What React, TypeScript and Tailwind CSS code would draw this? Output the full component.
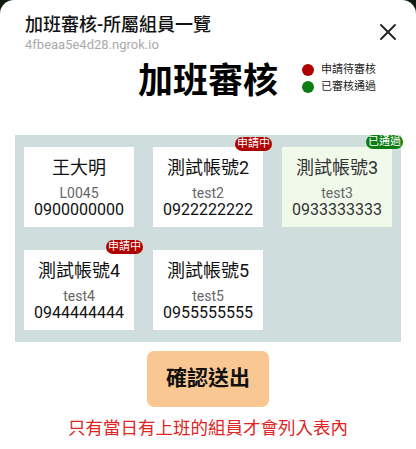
import { X } from "lucide-react"

type Member = {
  name: string
  id: string
  phone: string
  status?: "pending" | "approved"
}

const members: Member[] = [
  { name: "王大明", id: "L0045", phone: "0900000000" },
  { name: "測試帳號2", id: "test2", phone: "0922222222", status: "pending" },
  { name: "測試帳號3", id: "test3", phone: "0933333333", status: "approved" },
  { name: "測試帳號4", id: "test4", phone: "0944444444", status: "pending" },
  { name: "測試帳號5", id: "test5", phone: "0955555555" },
]

const font = "font-['Roboto','Noto_Sans_CJK_TC',sans-serif]"

function MemberCard({ member }: { member: Member }) {
  const approved = member.status === "approved"
  return (
    <div
      className={`relative h-[80px] flex flex-col items-center pt-[9px] ${
        approved ? "bg-[#f1f9eb]" : "bg-white"
      }`}
    >
      {member.status === "pending" && (
        <span className="absolute -top-[10px] -right-[9px] h-[14px] px-[2px] rounded-full bg-[#b00000] text-white text-[11px] leading-[14px]">
          申請中
        </span>
      )}
      {approved && (
        <span className="absolute -top-[12px] -right-[11px] h-[14px] px-[2px] rounded-full bg-[#0c7d12] text-white text-[11px] leading-[14px]">
          已通過
        </span>
      )}
      <div className={`text-[18px] leading-[24px] ${approved ? "text-[#333]" : "text-[#111]"}`}>{member.name}</div>
      <div className="mt-[4px] text-[14px] leading-[18px] text-[#666]">{member.id}</div>
      <div className={`text-[16px] leading-[16px] ${approved ? "text-[#333]" : "text-[#111]"}`}>{member.phone}</div>
    </div>
  )
}

export default function App() {
  return (
    <div className={`w-[416px] h-[449px] bg-[#0d1a10] ${font}`}>
      <div className="h-full bg-white rounded-t-[14px] flex flex-col">
        {/* Header */}
        <div className="flex items-start justify-between pl-[25px] pr-[14px] pt-[13px]">
          <div>
            <div className="text-[18px] leading-[24px] font-medium text-[#111]">加班審核-所屬組員一覽</div>
            <div className="text-[13px] leading-[16px] text-[#aaaaaa]">4fbeaa5e4d28.ngrok.io</div>
          </div>
          <X className="mt-[5px] w-[28px] h-[28px] text-[#222]" strokeWidth={1.6} />
        </div>

        {/* Title + legend */}
        <div className="relative flex justify-center mt-[9px]">
          <div className="text-[35px] leading-[40px] font-bold text-black">加班審核</div>
          <div className="absolute left-[302px] top-[2px] flex flex-col gap-[5px]">
            <div className="flex items-center gap-[7px]">
              <span className="w-[12px] h-[12px] rounded-full bg-[#b00000]" />
              <span className="text-[11px] leading-[12px] text-[#222]">申請待審核</span>
            </div>
            <div className="flex items-center gap-[7px]">
              <span className="w-[12px] h-[12px] rounded-full bg-[#0c7d12]" />
              <span className="text-[11px] leading-[12px] text-[#222]">已審核通過</span>
            </div>
          </div>
        </div>

        {/* Members panel */}
        <div className="mx-[15px] mt-[33px] bg-[#d0dddd] px-[9px] py-[12px] grid grid-cols-3 gap-x-[19px] gap-y-[23px]">
          {members.map((m) => (
            <MemberCard key={m.id} member={m} />
          ))}
        </div>

        <div className="flex justify-center mt-[9px]">
          <button className="w-[122px] h-[56px] rounded-[7px] bg-[#f9c892] text-[21px] font-bold text-[#111]">
            確認送出
          </button>
        </div>

        <div className="mt-[9px] text-center text-[17.5px] leading-[24px] text-[#e02424]">
          只有當日有上班的組員才會列入表內
        </div>
      </div>
    </div>
  )
}
